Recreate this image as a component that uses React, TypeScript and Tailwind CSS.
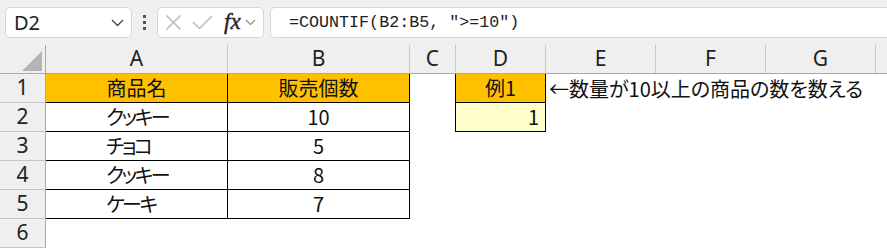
import React from "react";

const jp = "font-['Noto_Sans_CJK_JP',sans-serif] [font-feature-settings:'palt']";
const hdrFont = "font-['Noto_Sans',sans-serif]";

function HeaderCell({ w, label }: { w: string; label: string }) {
  return (
    <div className={`${w} h-full border-r border-[#c8c8c8] flex items-center justify-center text-[21px] text-[#222] ${hdrFont}`}>
      {label}
    </div>
  );
}

function RowHead({ n }: { n: number }) {
  return (
    <div className={`w-[46px] shrink-0 h-full bg-[#efefef] border-r border-b border-r-[#a9a9a9] border-b-[#c4c4c4] flex items-center justify-center text-[21px] text-[#222] ${hdrFont}`}>
      {n}
    </div>
  );
}

const data = [
  ["クッキー", "10"],
  ["チョコ", "5"],
  ["クッキー", "8"],
  ["ケーキ", "7"],
];

export default function App() {
  return (
    <div className="w-[887px] h-[248px] bg-white overflow-hidden flex flex-col">
      {/* top bar */}
      <div className="h-[45px] shrink-0 bg-[#f0f0f0] flex items-start pt-[7px]">
        <div className="ml-[5px] w-[127px] h-[31px] bg-white border border-[#d6d6d6] rounded-[5px] flex items-center justify-between pl-[8px] pr-[7px]">
          <span className={`text-[20px] text-[#222] ${hdrFont}`}>D2</span>
          <svg width="13" height="8" viewBox="0 0 13 8">
            <polyline points="1,1 6.5,6.5 12,1" fill="none" stroke="#444" strokeWidth="1.3" />
          </svg>
        </div>
        <div className="w-[25px] h-[31px] flex flex-col items-center justify-center gap-[3px]">
          <div className="w-[3px] h-[3px] bg-[#555]" />
          <div className="w-[3px] h-[3px] bg-[#555]" />
          <div className="w-[3px] h-[3px] bg-[#555]" />
        </div>
        <div className="w-[107px] h-[31px] bg-white border border-[#d6d6d6] rounded-[5px] flex items-center pl-[7px]">
          <svg width="17" height="17" viewBox="0 0 17 17">
            <line x1="1.5" y1="1.5" x2="15.5" y2="15.5" stroke="#b8b8b8" strokeWidth="1.4" />
            <line x1="15.5" y1="1.5" x2="1.5" y2="15.5" stroke="#b8b8b8" strokeWidth="1.4" />
          </svg>
          <svg className="ml-[10px]" width="21" height="15" viewBox="0 0 21 15">
            <polyline points="1,7 7.5,13.5 20,1" fill="none" stroke="#b8b8b8" strokeWidth="1.4" />
          </svg>
          <span className="ml-[11px] text-[23px] italic text-[#222] font-['Liberation_Serif',serif] leading-none -mt-[3px] [-webkit-text-stroke:0.4px_#222]">fx</span>
          <svg className="ml-[4px]" width="11" height="7" viewBox="0 0 11 7">
            <polyline points="1,1 5.5,5.5 10,1" fill="none" stroke="#8a8a8a" strokeWidth="1.2" />
          </svg>
        </div>
        <div className="ml-[6px] flex-1 h-[31px] bg-white border border-r-0 border-[#d6d6d6] rounded-l-[5px] flex items-center pl-[18px]">
          <span className="text-[16.7px] text-[#222] font-['Liberation_Mono',monospace] whitespace-pre">=COUNTIF(B2:B5, "&gt;=10")</span>
        </div>
      </div>

      {/* column headers */}
      <div className="h-[29px] shrink-0 flex bg-[#efefef] border-b border-[#a9a9a9]">
        <div className="w-[46px] shrink-0 h-full border-r border-[#a9a9a9] flex items-end justify-end pr-[3px] pb-[2px]">
          <svg width="20" height="20" viewBox="0 0 20 20">
            <polygon points="20,0 20,20 0,20" fill="#b4b4b4" />
          </svg>
        </div>
        <HeaderCell w="w-[182px]" label="A" />
        <HeaderCell w="w-[182px]" label="B" />
        <HeaderCell w="w-[46px]" label="C" />
        <HeaderCell w="w-[90px]" label="D" />
        <HeaderCell w="w-[110px]" label="E" />
        <HeaderCell w="w-[110px]" label="F" />
        <HeaderCell w="w-[110px]" label="G" />
        <div className="flex-1" />
      </div>

      {/* row 1 */}
      <div className="h-[29px] shrink-0 flex">
        <RowHead n={1} />
        <div className={`w-[182px] h-full bg-[#ffc000] border-r border-b border-black flex items-center justify-center text-[20px] text-[#111] ${jp}`}>商品名</div>
        <div className={`w-[182px] h-full bg-[#ffc000] border-r border-b border-black flex items-center justify-center text-[20px] text-[#111] ${jp}`}>販売個数</div>
        <div className="w-[46px] h-full border-r border-black" />
        <div className={`w-[90px] h-full bg-[#ffc000] border-r border-b border-black flex items-center justify-center text-[20px] text-[#111] ${jp}`}>例1</div>
        <div className={`flex-1 h-full flex items-center pl-[3px] whitespace-nowrap text-[20px] text-[#111] ${jp}`}>←数量が10以上の商品の数を数える</div>
      </div>

      {data.map(([name, num], i) => (
        <div key={i} className="h-[29px] shrink-0 flex">
          <RowHead n={i + 2} />
          <div className={`w-[182px] h-full border-r border-b border-black flex items-center pl-[60px] text-[20px] tracking-[-2.5px] text-[#111] ${jp}`}>{name}</div>
          <div className={`w-[182px] h-full border-r border-b border-black flex items-center justify-center text-[20px] text-[#111] ${jp}`}>{num}</div>
          {i === 0 ? (
            <>
              <div className="w-[46px] h-full border-r border-black" />
              <div className={`w-[90px] h-full bg-[#ffffcc] border-r border-b border-black flex items-center justify-end pr-[6px] text-[20px] text-[#111] ${jp}`}>1</div>
            </>
          ) : null}
          <div className="flex-1" />
        </div>
      ))}

      {/* row 6 */}
      <div className="h-[29px] shrink-0 flex">
        <RowHead n={6} />
        <div className="flex-1" />
      </div>
    </div>
  );
}
